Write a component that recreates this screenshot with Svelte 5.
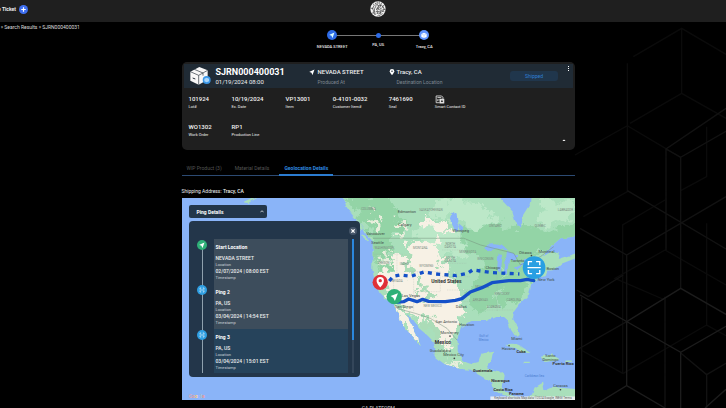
<script>
  const stops = [
    { name: 'NEVADA STREET', kind: 'nav' },
    { name: 'PA, US', kind: 'dot' },
    { name: 'Tracy, CA', kind: 'box' }
  ];
  const details = [
    ['101924', 'Lot#'],
    ['10/19/2024', 'Ex. Date'],
    ['VP13001', 'Item'],
    ['0-4101-0032', 'Customer Item#'],
    ['7461690', 'Seal']
  ];
  const more = [
    ['WO1302', 'Work Order'],
    ['RP1', 'Production Line']
  ];
  const tabs = ['WIP Product (3)', 'Material Details', 'Geolocation Details'];
  let active = $state(2);
  let open = $state(true);
  const pings = [
    { title: 'Start Location', place: 'NEVADA STREET', time: '02/07/2024 | 08:00 EST', start: true },
    { title: 'Ping 2', place: 'PA, US', time: '03/04/2024 | 14:54 EST' },
    { title: 'Ping 3', place: 'PA, US', time: '03/04/2024 | 15:01 EST' }
  ];
  const cities = [
    [565, 46, 'COLUMBIA', 0], [680, 53, 'Edmonton', 1], [752, 47, 'SASKATCHEWAN', 0],
    [674, 93, 'Calgary', 1], [841, 110, 'Winnipeg', 1], [945, 96, 'ONTARIO', 0],
    [1079, 97, 'QUEBEC', 0], [1155, 48, 'LABRADOR', 0], [586, 121, 'Vancouver', 1],
    [592, 146, 'Seattle', 1], [612, 163, 'WASHINGTON', 0], [720, 163, 'MONTANA', 0],
    [610, 208, 'OREGON', 0], [672, 210, 'IDAHO', 0], [738, 217, 'WYOMING', 0],
    [810, 149, 'NORTH', 0], [810, 159, 'DAKOTA', 0], [810, 191, 'SOUTH', 0], [810, 201, 'DAKOTA', 0],
    [862, 175, 'MINNESOTA', 0], [915, 195, 'WISCONSIN', 0], [1035, 176, 'Ottawa', 1],
    [1098, 174, 'Montreal', 1], [1012, 201, 'Toronto', 1], [1117, 226, 'Boston', 1],
    [1097, 258, 'New York', 1], [937, 222, 'Chicago', 1], [650, 262, 'NEVADA', 0],
    [692, 306, 'Las Vegas', 1], [671, 340, 'San Diego', 1], [757, 335, 'NEW MEXICO', 0],
    [843, 338, 'Dallas', 1], [905, 278, 'MISSOURI', 0], [900, 318, 'ARKANSAS', 0],
    [965, 300, 'KENTUCKY', 0], [940, 340, 'ALABAMA', 0], [1000, 318, 'CAROLINA', 0],
    [798, 384, 'San Antonio', 1], [859, 392, 'Houston', 1], [808, 417, 'Monterrey', 1],
    [780, 470, 'Guadalajara', 1], [820, 484, 'Mexico City', 1], [1009, 435, 'Miami', 1],
    [984, 465, 'Havana', 1], [1110, 486, 'Santo', 1], [1110, 498, 'Domingo', 1],
    [1140, 576, 'Caracas', 1]
  ];
  const land =
    'M482 -20 500 38 518 62 540 85 556 115 578 140 577 185 576 222 584 262 598 292 618 312 640 330 654 356 664 385 676 405 695 425 718 452 714 428 700 402 686 376 680 358 700 376 716 400 740 420 760 440 765 460 762 484 790 505 838 522 868 524 905 545 935 562 942 588 972 600 1010 612 1050 640H1250V584L1185 582 1140 578 1120 574 1092 586 1088 562 1062 578 1055 598 1030 612 1005 604 990 600 964 575 970 540 955 528 920 520 932 500 938 470 903 475 895 500 870 506 846 498 832 465 832 428 842 396 870 378 918 378 945 366 968 366 982 378 992 405 1008 428 1018 420 1012 395 998 372 1000 350 1022 322 1046 298 1052 268 1070 256 1096 242 1102 224 1125 222 1145 206 1185 190V176L1132 192 1135 172 1115 168 1085 186 1105 160 1140 130 1250 118V-20H1055L1048 28 1028 60 1022 99 1008 90 995 48 958 9V-20z';
</script>

{#snippet scan()}
  <svg viewBox="0 0 24 24" fill="none" stroke="#fff" stroke-width="2.4" aria-hidden="true">
    <path d="M4 9V4h5M15 4h5v5M20 15v5h-5M9 20H4v-5M3 12h18" />
  </svg>
{/snippet}
{#snippet plane(color)}
  <svg viewBox="0 0 24 24" aria-hidden="true"><path d="M22 2 2 10.500v1.500l8 3 3 8h1.500z" fill={color} /></svg>
{/snippet}

<div class="page">
  <svg class="hexes" viewBox="0 0 468 1224" preserveAspectRatio="xMaxYMin slice" fill="none" stroke-width="4" aria-hidden="true">
    <g stroke="#0b0b0b">
      <path d="M190 170 335 85 468 163M335 85v195L180 370M335 280l133 75M172 190v385L40 650M15 465l157-88 160 95M410 380v150l-78 42M410 670v305l58 32M285 600l-127 75v445l-125-70M410 975l-250 145M285 750l183 105M285 750l-150 85 150 65" />
    </g>
    <g stroke="#121212">
      <path d="M468 325 288 447l44 25 136-78M288 447v303M332 472v393M172 572l296 175M468 590 170 765 30 685M170 765v200M55 890l105-65M20 870l35 20v0M35 890v334M285 890v334M20 1050l150-85M410 1224v-100l-78-65M410 1124l58-34" />
    </g>
    <g stroke="#1c1c1c">
      <path d="M30 885 332 1057l136-78M468 943 332 865 170 965v192L60 1224M170 1157l115 67M332 1057v167M405 1224l63-56" />
    </g>
  </svg>

  <header>
    <button class="ticket">Create Ticket
      <span class="plus"><svg viewBox="0 0 10 10" stroke="#fff" stroke-width="1.300" aria-hidden="true"><path d="M5 2.500v5M2.500 5h5" /></svg></span>
    </button>
    <svg class="logo" viewBox="0 0 48 48" fill="none" aria-label="Logo" role="img">
      <circle cx="24" cy="24" r="23" fill="#f2f2f2" />
      <g stroke="#252525" stroke-width="1.900">
        <path d="M10 8q5 5 0 10t0 10-3 9M15 5q6 6 2 12t-4 10 3 15M22 2q-3 8 2 12t-4 8M28 2q-3 5 2 9t-2 8M35 5q-5 5 1 9t-2 8M42 12q-5 4-1 9t-2 8M2 22h8M18 26q6-4 10 0t10 1 9-2M17 32q6-4 10 0t9 0 8 2M20 38q5-4 9 0t9 0M22 45q4-5 9-1M24 14h10M8 34l7 6" />
        <path d="M20 22h7v-4M32 20v5M22 29v8M31 30v8" />
      </g>
    </svg>
  </header>
  <nav class="crumbs" aria-label="Breadcrumb"><a href="#home">Home</a> » <a href="#results">Search Results</a> » <span>SJRN000400031</span></nav>

  <main>
    <ol class="stepper">
      {#each stops as s}
        <li class={s.kind}>
          <span class="node">
            {#if s.kind === 'nav'}{@render plane('#dff')}{:else if s.kind === 'box'}
              <svg viewBox="0 0 24 24" aria-hidden="true"><path d="M4 9l8-4 8 4v9l-8 3-8-3z" fill="#fff" /><path d="M4 9l8 3 8-3M12 12v9" stroke="#79aaff" fill="none" /></svg>
            {/if}
          </span>
          <span>{s.name}</span>
        </li>
      {/each}
    </ol>

    <section class="card">
      <div class="band">
        <svg class="package" viewBox="0 0 66 60" aria-hidden="true">
          <path d="M4 17 31 3l25 10v28L29 56 4 44z" fill="#f8f8f8" />
          <path d="M4 17l25 11 27-15M29 28v28M16 10l26 11v8" fill="none" stroke="#26303a" stroke-width="2" />
          <path d="M11 36l8 3" stroke="#26303a" stroke-width="3" />
          <circle cx="53" cy="42" r="12" fill="#3c98e8" /><path d="M46 38l7-3 7 3v8l-7 3-7-3z" fill="#a9d6fb" />
        </svg>
        <div class="ident"><h1>SJRN000400031</h1><p>01/19/2024 08:00</p></div>
        <div class="spot"><span class="ico">{@render plane('#fff')}</span><div><strong>NEVADA STREET</strong><small>Produced At</small></div></div>
        <div class="spot dest">
          <span class="ico"><svg viewBox="0 0 24 24" aria-hidden="true"><path d="M12 0a9 9 0 0 0-9 9c0 6 9 15 9 15s9-9 9-15a9 9 0 0 0-9-9z" fill="#fff" /><circle cx="12" cy="9" r="3" fill="#202c37" /></svg></span>
          <div><strong>Tracy, CA</strong><small>Destination Location</small></div>
        </div>
        <span class="status">Shipped</span>
        <button class="kebab" aria-label="More options"><i></i><i></i><i></i></button>
      </div>
      <dl>
        {#each details as [v, k]}<div><dd>{v}</dd><dt>{k}</dt></div>{/each}
        <div>
          <dd class="smart"><svg viewBox="0 0 28 28" fill="none" stroke="#eee" stroke-width="2.500" aria-label="Contact card" role="img"><path d="M2 24V3h17l4 4v5M2 24h11M6 8h12M7 13v6M11 13v4" /><rect x="14" y="13" width="12" height="12" fill="#ddd" /><path d="M20 16v6M17 20h6" stroke="#222" /></svg></dd>
          <dt>Smart Contact ID</dt>
        </div>
        {#each more as [v, k]}<div><dd>{v}</dd><dt>{k}</dt></div>{/each}
      </dl>
      <button class="collapse" aria-label="Collapse"><svg viewBox="0 0 10 6" aria-hidden="true"><path d="M0 6l5-5 5 5z" fill="#fff" /></svg></button>
    </section>

    <div class="tabs" role="tablist">
      {#each tabs as t, i}
        <button role="tab" aria-selected={active === i} class:active={active === i} onclick={() => (active = i)}>{t}</button>
      {/each}
    </div>

    <p class="address">Shipping Address: <b>Tracy, CA</b></p>

    <section class="map">
      <svg class="chart" viewBox="6 9 1179 606" preserveAspectRatio="xMidYMid slice" role="img" aria-label="Route map of North America">
        <defs>
          <filter id="ragged" filterUnits="userSpaceOnUse" x="440" y="-20" width="800" height="680"><feTurbulence type="fractalNoise" baseFrequency="0.035" numOctaves="4" seed="7" /><feDisplacementMap in="SourceGraphic" scale="70" xChannelSelector="R" yChannelSelector="G" /></filter>
          <filter id="coast" filterUnits="userSpaceOnUse" x="150" y="-20" width="1090" height="680"><feTurbulence type="fractalNoise" baseFrequency="0.05" numOctaves="2" seed="3" /><feDisplacementMap in="SourceGraphic" scale="12" xChannelSelector="R" yChannelSelector="G" /></filter>
          <clipPath id="land"><path d={land} /></clipPath>
        </defs>
        <rect x="-400" y="-200" width="2000" height="1000" fill="#8ab4f8" />
        <g filter="url(#coast)">
          <path d={land} fill="#a9dfbb" />
          <path d="M975 450q30-10 50 8l25 15q-25 3-45-14-20-2-30-9zM1080 485l35-7 25 16-45 7zM1030 500h18v4h-18zM1155 496h16v5h-16zM530 70l18 30-3 8-18-25zM548 118l18 15-4 6-16-14zM188 22l30-14h15l-25 16z" fill="#a9dfbb" />
          <g clip-path="url(#land)">
            <g filter="url(#ragged)">
              <path d="M490 0 640 0 670 90 620 160 655 210 600 250 575 120zM850 100 960 95 1230 100V170L1080 165 1060 250 990 240 860 165zM900 190l60 0 10 80-40 70-60 20-5-60zM970 240l100 10-50 70-60 20z" fill="#93d4a6" />
              <path d="M760 20h140l60 60-80 20-60-30-80 0zM1080 20h100v60l-110 0zM690 100l100 -10 60 40 10 60-60-10z" fill="#bce8c8" />
              <path d="M690 140 770 135 790 190 820 240 850 310 845 350 830 400 800 450 810 480 780 450 750 400 700 355 660 330 650 290 610 290 600 230 640 235 640 180 690 195zM720 70l90 15 0 25-80-5zM620 330l50 20 60 90-15 10z" fill="#f7f1e5" />
              <path d="M570 70l20 5 5 25-15-5zM605 60l20 20-10 15zM640 80l30 20 10 30-20-10zM595 180l25-5 15 35-30 5zM560 35l25 5-10 15zM790 500l55 15-20 10z" fill="#e8eedc" />
              <path d="M665 190l20-10 15 40-10 30-15-25zM700 250l20-15 10 40-20 20zM765 190l15 5 5 30zM720 295l30-10 10 25-35 10zM735 350l30 30 30 90-20 0-35-60z" fill="#abdcb7" />
            </g>
          </g>
          <path d="M908 160q25-25 60-8l15 14-35-5-25 8zM955 178l12 2-7 55q-15 0-5-57zM980 168l32 12-8 18-18 0-6 40-10-4zM1000 218l28-12 4 5-24 12zM1026 198l25-10 2 6-24 8zM815 48l14 8 5 55-8 0-18-38zM835 85l14 12-4 18-10-16z" fill="#8ab4f8" />
        </g>
        <path d="M578 130H850L900 150 1000 175 1020 210 1080 185 1120 155M650 340 705 355 750 370 800 400 830 435" fill="none" stroke="#75917d" stroke-width="1.500" />
        <path d="M580 178H670M690 230H780V290H700V235M640 250V295L655 330M700 290V350M785 165H850M785 205H860M785 245H870M800 285H890M850 320H900M650 175v60M950 240v110M920 260h80M900 345h100" fill="none" stroke="#9aaaa0" stroke-width="1" stroke-dasharray="3 2" opacity=".7" />
        <g class="labels">
          {#each cities as [x, y, t, town]}<text {x} {y} class:town={town}>{t}</text>{/each}
          <text x="798" y="263" class="country">United States</text>
          <text x="788" y="447" class="nation">Mexico</text>
          <text x="907" y="532" class="nation2">Guatemala</text>
          <text x="960" y="562" class="nation2">Nicaragua</text>
          <text x="968" y="587" class="nation2">Costa Rica</text>
          <text x="1008" y="600" class="nation2">Panama</text>
          <text x="1022" y="473" class="nation2">Cuba</text>
          <text x="1148" y="511" class="nation2">Puerto Rico</text>
          <text x="910" y="427" class="sea">Gulf of</text><text x="910" y="438" class="sea">Mexico</text>
          <text x="1062" y="545" class="sea">Caribbean Sea</text>
          <g fill="#444"><circle cx="822" cy="490" r="2.500" /><circle cx="986" cy="452" r="2.500" /><circle cx="1140" cy="584" r="2.500" /><circle cx="1053" cy="182" r="2.500" /><circle cx="809" cy="423" r="2.500" /></g>
        </g>
        <path d="M627 258l12-14 20-4 33 4 40-13 35 6 60 5 35-7 15-10 60 8 80 4" fill="none" stroke="#1450c8" stroke-width="10" stroke-dasharray="12 13" />
        <path d="M645 322l25-2 15-8 25 8 17-7 18 6 50 1 30-4 20-5 25-20 35-13 30-15 50-6 35 0 20-4 20 4" fill="none" stroke="#1450c8" stroke-width="10" stroke-linecap="round" stroke-linejoin="round" />
        <g><circle cx="600" cy="262" r="23" fill="#df3038" /><path d="M600 246a11 11 0 0 0-11 11c0 9 11 20 11 20s11-11 11-20a11 11 0 0 0-11-11z" fill="#fff" /><circle cx="600" cy="257" r="5" fill="#df3038" /></g>
        <g><circle cx="642" cy="305" r="23" fill="#2fb078" /><path d="M653 295l-22 8 8 5 5 10z" fill="#fff" /></g>
        <g><circle cx="1061" cy="218" r="34" fill="#299fe2" /><path d="M1044 211v-11h11M1067 200h11v11M1078 225v11h-11M1055 236h-11v-11M1041 218h40" fill="none" stroke="#fff" stroke-width="4" /></g>
        <rect x="930" y="604" width="255" height="11" fill="#eef1f3" opacity=".9" />
        <text x="1058" y="612" class="legal">Keyboard shortcuts   Map data ©2024 Google, INEGI   Terms</text>
        <text x="26" y="609" class="brand"><tspan fill="#d9a9b8">G</tspan><tspan fill="#e6a0a0">o</tspan><tspan fill="#ffd27a">o</tspan><tspan fill="#9cb8ff">g</tspan><tspan fill="#b9c7c0">l</tspan><tspan fill="#ea9a9a">e</tspan></text>
      </svg>

      <div class="overlay">
        <button class="toggle" aria-expanded={open} onclick={() => (open = !open)}>Ping Details
          <svg viewBox="0 0 10 6" aria-hidden="true"><path d="M1 5l4-4 4 4" fill="none" stroke="#fff" stroke-width="1.800" /></svg>
        </button>
        {#if open}
          <div class="panel">
            <button class="close" aria-label="Close" onclick={() => (open = false)}><svg viewBox="0 0 10 10" aria-hidden="true"><path d="M3 3l4 4M7 3l-4 4" stroke="#fff" stroke-width="1.600" /></svg></button>
            <div class="scroller">
              <ol class="pings">
                {#each pings as p, i}
                  <li class:current={i === 2}>
                    <span class="rail"><span class="bead" class:start={p.start}>{#if p.start}{@render plane('#fff')}{:else}{@render scan()}{/if}</span></span>
                    <div class="ping"><h2>{p.title}</h2><b>{p.place}</b><small>Location</small><b>{p.time}</b><small>Timestamp</small></div>
                  </li>
                {/each}
              </ol>
              <div class="bar"><span></span></div>
            </div>
          </div>
        {/if}
      </div>
    </section>
    <footer>CA PLATFORM</footer>
  </main>
</div>

<style>
  :global(body) { margin: 0; background: #000; }
  .page { position: relative; height: 100vh; overflow: hidden; background: #000; color: #eee; font: 5px/6px Roboto, "Liberation Sans", sans-serif; }
  .page * { box-sizing: border-box; }
  button { font: inherit; color: inherit; background: none; border: 0; padding: 0; margin: 0; }
  svg { display: block; }
  a { color: inherit; text-decoration: none; }
  h1, h2, p, ol, dl, dd { margin: 0; padding: 0; }
  ol { list-style: none; }
  small { font-size: 4px; line-height: 5px; display: block; }

  .hexes { position: absolute; right: 0; top: 0; width: 156px; height: 408px; }
  header { position: relative; display: grid; grid-template-columns: 12fr 16px 11fr; align-items: center; height: 22px; padding-bottom: 4px; background: #1f1f1f; }
  .ticket { display: flex; align-items: center; gap: 3px; justify-self: start; font-weight: 700; margin-left: -14px; white-space: nowrap; }
  .plus { width: 9px; height: 9px; border-radius: 50%; background: #3f6ff0; }
  .logo { width: 16px; height: 16px; }
  .crumbs { height: 10px; padding-top: 2px; margin-left: -14px; color: #ddd; }

  main { position: relative; width: 54.2%; margin-left: 25%; }
  .stepper { display: grid; grid-template-columns: 1fr 1fr 1fr; width: 138px; margin: -2px auto 0; height: 32px; font-size: 4px; line-height: 5px; font-weight: 500; }
  .stepper li { display: flex; flex-direction: column; align-items: center; position: relative; }
  .stepper li + li::before { content: ""; position: absolute; height: 1px; background: #777; top: 5px; right: 50%; width: 100%; }
  .node { position: relative; z-index: 1; width: 10px; height: 10px; border-radius: 50%; background: #2e6be6; margin-bottom: 4px; padding: 2px; }
  .box .node { background: #5f94ff; padding: 1px; }
  .dot .node { width: 5px; height: 5px; margin: 3px 0 4px; }

  .card { border-radius: 5px; background: #1f1f1f; height: 88px; padding-top: 2px; }
  .band { display: flex; align-items: center; height: 24px; margin: 0 2px; padding-left: 5px; background: #202b35; }
  .package { width: 22px; height: 20px; }
  .ident { width: 98px; padding-left: 5px; }
  h1 { font-size: 9px; line-height: 11px; font-weight: 700; color: #fff; }
  .ident p { font-size: 6px; line-height: 8px; }
  .spot { display: flex; gap: 3px; width: 80px; }
  .spot.dest { width: auto; flex: 1; gap: 2px; }
  .spot strong { display: block; font-size: 6px; line-height: 8px; font-weight: 500; margin-bottom: 3px; white-space: nowrap; }
  .spot small { font-size: 5px; line-height: 6px; color: #7f8790; }
  .ico { width: 6px; height: 6px; margin-top: 1px; }
  .status { width: 48px; height: 10px; line-height: 10px; border-radius: 3px; background: #20364c; color: #2f7fd6; text-align: center; margin-right: 6px; }
  .kebab { width: 9px; align-self: start; display: flex; flex-direction: column; align-items: center; gap: 1px; padding-top: 2px; }
  .kebab i { width: 1px; height: 1px; background: #fff; }
  dl { display: grid; grid-template-columns: 43fr 54fr 47fr 56fr 46fr 140fr; padding: 6px 0 0 7px; row-gap: 12px; }
  dl > div { display: flex; flex-direction: column; height: 16px; }
  dd { font-size: 6px; line-height: 9px; font-weight: 500; color: #f2f2f2; }
  dt { font-size: 4px; line-height: 7px; color: #eee; }
  .smart { height: 11px; padding-top: 1px; margin-bottom: -1px; }
  .smart svg { width: 10px; height: 9px; }
  .collapse { display: block; margin: 0 8px 0 auto; width: 6px; padding: 1px; }

  .tabs { display: flex; gap: 7px; margin-top: 12px; height: 14px; border-bottom: 1px solid #2c4a72; padding-left: 2px; color: #555; }
  .tabs button { padding: 0 3px; border-bottom: 2px solid transparent; height: 14px; white-space: nowrap; }
  .tabs button.active { color: #2f8be0; font-weight: 700; border-color: #2b7cd0; padding: 0 5px; }
  .address { margin: 12px 0 4px; }
  b { font-weight: 500; }

  .map { position: relative; height: 202px; overflow: hidden; }
  .chart { width: 100%; height: 100%; }
  .labels text { font-size: 9px; fill: #7b8a82; text-anchor: middle; font-family: Roboto, sans-serif; }
  .labels .town { font-size: 12px; fill: #3f4a45; }
  .labels .country { font-size: 15px; font-weight: 700; fill: #333; }
  .labels .nation { font-size: 15px; font-weight: 700; fill: #333; }
  .labels .nation2 { font-size: 12px; font-weight: 700; fill: #333; }
  .labels .sea { font-size: 9px; fill: #4a7ed0; }
  .legal { font-size: 9px; text-anchor: middle; fill: #555; }
  .brand { font-size: 15px; font-weight: 700; }

  .overlay { position: absolute; top: 7px; left: 7px; width: 171px; }
  .toggle { display: flex; align-items: center; justify-content: space-between; width: 78px; height: 13px; padding: 0 3px 0 8px; border-radius: 2px; background: #23364a; font-weight: 700; color: #fff; }
  .toggle svg { width: 4px; height: 3px; }
  .panel { margin-top: 3px; height: 156px; padding: 6px 6px 4px 8px; border-radius: 4px; background: #23364a; }
  .close { display: block; margin: 0 -3px 4px auto; width: 8px; height: 8px; border-radius: 50%; background: #46566a; }
  .scroller { display: flex; height: 134px; overflow: hidden; }
  .pings { flex: 1; }
  .pings li { display: flex; height: 45px; }
  .rail { width: 17px; background: linear-gradient(#8fa0ad, #8fa0ad) 5px 0 / 1px 100% no-repeat; }
  .pings li:first-child .rail { background-position: 5px 10px; }
  .bead { display: block; width: 10px; height: 10px; border-radius: 50%; background: #2f9fe3; padding: 2px; margin-top: 1px; }
  .bead.start { background: #2fb078; }
  .ping { flex: 1; padding: 5px 0 0 2px; background: #3d4d5c; color: #eee; }
  .current .ping { background: #26435b; }
  h2 { font-size: 5px; line-height: 6px; font-weight: 700; margin-bottom: 5px; color: #fff; }
  .ping b { display: block; line-height: 6px; margin-top: 1px; }
  .ping small { color: #ccd3d9; margin-top: 1px; }
  .bar { width: 2px; margin-left: 4px; background: #34465a; }
  .bar span { display: block; height: 101px; background: #2b86dc; }
  footer { padding-top: 5px; text-align: center; color: #ddd; }
</style>
